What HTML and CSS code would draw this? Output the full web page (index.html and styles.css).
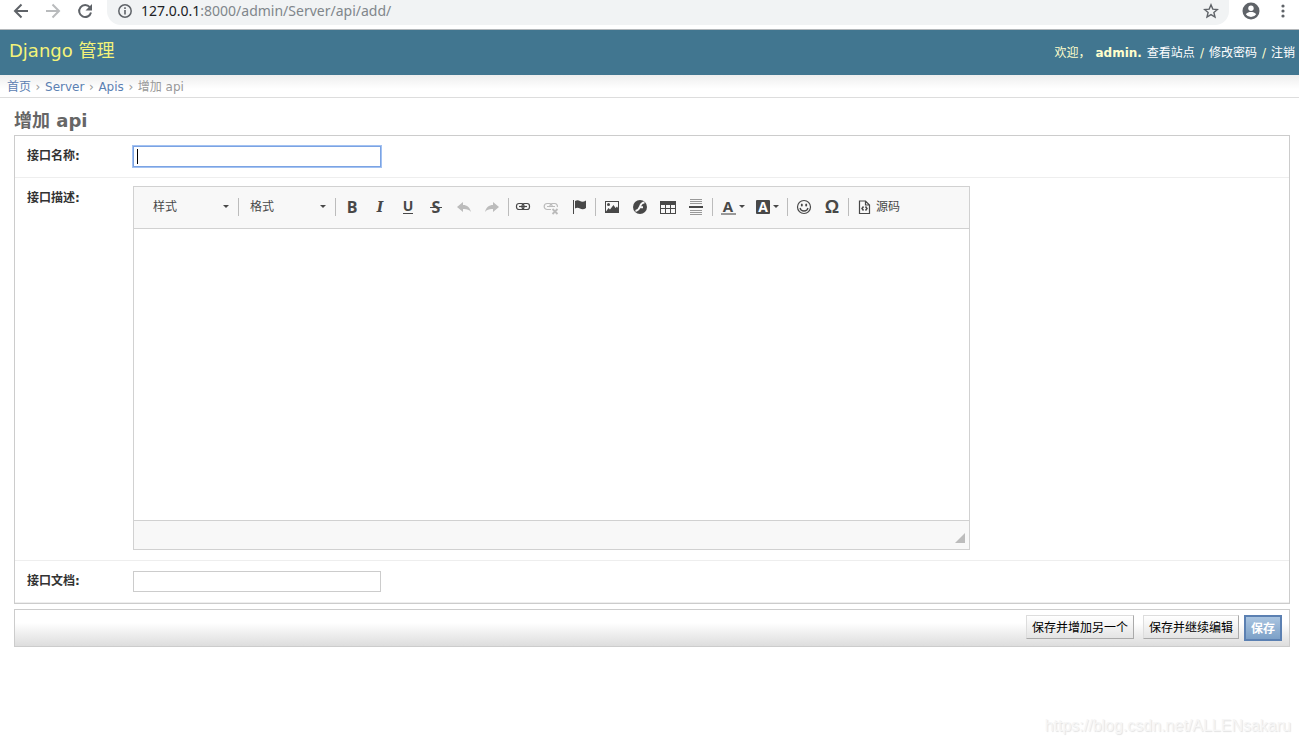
FILE: index.html
```html
<!DOCTYPE html>
<html lang="zh-CN">
<head>
<meta charset="utf-8">
<title>增加 api | Django 管理</title>
<link rel="stylesheet" href="styles.css">
</head>
<body>
<div class="browser-bar">
  <button class="nav-btn" type="button" aria-label="后退"><svg width="16" height="16" viewBox="0 0 16 16" fill="none" stroke="#5f6368" stroke-width="2"><path d="M15 8H2.500M8.500 1.500 2 8l6.500 6.500"/></svg></button>
  <button class="nav-btn" type="button" aria-label="前进"><svg width="16" height="16" viewBox="0 0 16 16" fill="none" stroke="#b9bbbd" stroke-width="2"><path d="M1 8h12.500M7.500 1.500 14 8l-6.500 6.500"/></svg></button>
  <button class="nav-btn" type="button" aria-label="刷新"><svg width="16" height="16" viewBox="0 0 16 16"><path d="M12.800 4.200A6 6 0 1 0 14 9.500" fill="none" stroke="#5f6368" stroke-width="2"/><path d="M15 1v6.500H8.500z" fill="#5f6368"/></svg></button>
  <div class="omnibox">
    <svg width="16" height="16" viewBox="0 0 16 16"><circle cx="8" cy="8" r="6.200" fill="none" stroke="#5f6368" stroke-width="1.500"/><path d="M7.200 7h1.600v4.500H7.200zM7.200 4.300h1.600v1.600H7.200z" fill="#5f6368"/></svg>
    <span class="url"><span class="url-host">127.0.0.1</span>:8000/admin/Server/api/add/</span>
    <svg width="16" height="16" viewBox="0 0 16 16"><path d="m8 1.800 1.800 4.300 4.600.4-3.500 3 1.100 4.500L8 11.600 4 14l1.100-4.500-3.500-3 4.600-.4z" fill="none" stroke="#5f6368" stroke-width="1.400"/></svg>
  </div>
  <button class="nav-btn" type="button" aria-label="用户"><svg width="18" height="18" viewBox="0 0 18 18"><circle cx="9" cy="9" r="8.500" fill="#5f6368"/><circle cx="9" cy="6.200" r="2.700" fill="#fff"/><path d="M3.800 12.200c1-1.700 3.300-2.200 5.200-2.200s4.200.5 5.200 2.200A6.200 6.200 0 0 1 9 15a6.200 6.200 0 0 1-5.200-2.800z" fill="#fff"/></svg></button>
  <button class="nav-btn" type="button" aria-label="菜单"><svg width="16" height="16" viewBox="0 0 16 16" fill="#5f6368"><circle cx="8" cy="3" r="1.600"/><circle cx="8" cy="8" r="1.600"/><circle cx="8" cy="13" r="1.600"/></svg></button>
</div>

<header class="header">
  <div class="branding">Django 管理</div>
  <div class="user-tools"><span>欢迎，</span> <strong>admin.</strong> <a href="#">查看站点</a> <span>/</span> <a href="#">修改密码</a> <span>/</span> <a href="#">注销</a></div>
</header>
<nav class="breadcrumbs"><a href="#">首页</a> <span class="crumb-sep">›</span> <a href="#">Server</a> <span class="crumb-sep">›</span> <a href="#">Apis</a> <span class="crumb-sep">›</span> <span>增加 api</span></nav>

<main class="content">
  <h1 class="title">增加 api</h1>
  <form>
    <div class="module">
      <div class="form-row">
        <label class="field-label" for="name">接口名称:</label>
        <input class="text-field focused" id="name" type="text">
      </div>
      <div class="form-row editor-row">
        <span class="field-label">接口描述:</span>
        <div class="editor">
          <div class="toolbar">
            <button class="combo" type="button">样式<i class="arrow"></i></button>
            <i class="sep"></i>
            <button class="combo" type="button">格式<i class="arrow"></i></button>
            <i class="sep"></i>
            <div class="group">
              <button class="tool" type="button">B</button>
              <button class="tool italic" type="button">I</button>
              <button class="tool underline" type="button"><span>U</span></button>
              <button class="tool strike" type="button"><span>S</span></button>
              <button class="tool off" type="button" aria-label="撤消"><svg width="16" height="16" viewBox="0 0 16 16"><path d="M1 8l6-5v3c4 0 7 2.500 8 7-2-2.500-4.500-3.200-8-3v3z"/></svg></button>
              <button class="tool off" type="button" aria-label="重做"><svg width="16" height="16" viewBox="0 0 16 16"><path d="M15 8L9 3v3c-4 0-7 2.500-8 7 2-2.500 4.500-3.200 8-3v3z"/></svg></button>
            </div>
            <i class="sep"></i>
            <div class="group tight">
              <button class="tool" type="button" aria-label="链接"><svg width="16" height="16" viewBox="0 0 16 16" fill="none" stroke="#484848" stroke-width="1.200"><rect x="1.500" y="4.500" width="7.500" height="6" rx="2.500"/><rect x="7" y="4.500" width="7.500" height="6" rx="2.500"/><path d="M4 7.500h8"/></svg></button>
              <button class="tool" type="button" aria-label="取消链接"><svg width="16" height="16" viewBox="0 0 16 16" fill="none" stroke="#bbb" stroke-width="1.200"><path d="M8 10.500H4.200a2.700 2.700 0 0 1 0-6h2.300a2.700 2.700 0 0 1 2.600 3M7 8a2.700 2.700 0 0 1 2.600-3.500h2a2.700 2.700 0 0 1 2.700 3.500M4 7.500h8"/><path d="M9.500 10l5 5M14.500 10l-5 5" stroke-width="1.800"/></svg></button>
              <button class="tool" type="button" aria-label="锚点"><svg width="16" height="16" viewBox="0 0 16 16"><path d="M2 1h1v14H2zM4 2c2-1.200 3.500-1 5 0s3.500 1 6-.5V9c-2 1.500-4.300 1.500-6 .5S5.500 8.500 4 9.500z"/></svg></button>
            </div>
            <i class="sep"></i>
            <div class="group">
              <button class="tool" type="button" aria-label="图像"><svg width="16" height="16" viewBox="0 0 16 16"><path fill-rule="evenodd" d="M1 2h14v12H1zm1 1v9.500l2.500-3.500L6 10.500 9.500 6l2 3L13 7.500l1 1.500V3z"/><circle cx="4.500" cy="5.500" r="1.500"/></svg></button>
              <button class="tool" type="button" aria-label="Flash"><svg width="16" height="16" viewBox="0 0 16 16"><circle cx="8" cy="8" r="7"/><path d="M12.500 3.500C9.500 3.500 8.700 5.500 8 7.500S6.500 11.500 3.500 12M7 8.200h4" fill="none" stroke="#f8f8f8" stroke-width="1.900"/></svg></button>
              <button class="tool" type="button" aria-label="表格"><svg width="16" height="16" viewBox="0 0 16 16"><path fill-rule="evenodd" d="M0 2h16v13H0zm1 4v3h4V6zm5 0v3h4V6zm5 0v3h4V6zM1 10v4h4v-4zm5 0v4h4v-4zm5 0v4h4v-4z"/></svg></button>
              <button class="tool" type="button" aria-label="水平线"><svg width="16" height="16" viewBox="0 0 16 16"><path d="M2 0h12v1H2zm0 2h12v1H2zm0 2h12v1H2zm0 7h12v1H2zm0 2h12v1H2zm0 2h12v1H2z" fill="#999"/><path d="M1 7h14v2H1z"/></svg></button>
            </div>
            <i class="sep"></i>
            <div class="group">
              <button class="tool color" type="button"><span class="fg">A</span><i class="arrow"></i></button>
              <button class="tool color" type="button"><span class="bg">A</span><i class="arrow"></i></button>
            </div>
            <i class="sep"></i>
            <div class="group">
              <button class="tool" type="button" aria-label="表情符"><svg width="16" height="16" viewBox="0 0 16 16"><circle cx="8" cy="8" r="6.500" fill="none" stroke="#484848" stroke-width="1.200"/><ellipse cx="5.800" cy="6" rx="1" ry="1.500"/><ellipse cx="10.200" cy="6" rx="1" ry="1.500"/><path d="M4 9c1 4 7 4 8 0" fill="none" stroke="#484848" stroke-width="1.300"/></svg></button>
              <button class="tool omega" type="button">Ω</button>
            </div>
            <i class="sep"></i>
            <button class="source" type="button"><svg width="16" height="16" viewBox="0 0 16 16" fill="none" stroke="#484848"><path d="M3.500 2h6l4 4v8.500h-10zM9.500 2v4h4" stroke-width="1.200"/><path d="M7.500 7.500 6 9.500l1.500 2M9.500 7.500l1.500 2-1.500 2" stroke-width="1.500"/></svg>源码</button>
          </div>
          <div class="edit-area" contenteditable="true" aria-label="接口描述"></div>
          <div class="status"><svg width="10" height="10" viewBox="0 0 10 10"><path d="M10 0v10H0z" fill="#bcbcbc"/></svg></div>
        </div>
      </div>
      <div class="form-row">
        <label class="field-label" for="doc">接口文档:</label>
        <input class="text-field" id="doc" type="text">
      </div>
    </div>
    <div class="submit-row">
      <button class="btn btn-another" type="submit">保存并增加另一个</button>
      <button class="btn" type="submit">保存并继续编辑</button>
      <button class="btn btn-save" type="submit">保存</button>
    </div>
  </form>
</main>
<footer class="watermark">https://blog.csdn.net/ALLENsakaru</footer>
</body>
</html>
```

FILE: styles.css
```css
* { box-sizing: border-box; }
body {
  margin: 0;
  min-height: 100vh;
  display: flex;
  flex-direction: column;
  background: #fff;
  color: #333;
  font: 12px/16px "DejaVu Sans", "Noto Sans CJK SC", sans-serif;
}
button { font: inherit; color: inherit; }
svg { display: block; flex: none; }
a { text-decoration: none; }

.browser-bar {
  display: flex;
  align-items: flex-start;
  height: 30px;
  padding: 0 0 0 5px;
  border-bottom: 1px solid #b4b8bb;
}
.nav-btn {
  width: 32px;
  height: 22px;
  padding: 0;
  border: 0;
  background: none;
  display: flex;
  align-items: center;
  justify-content: center;
}
.omnibox {
  flex: 1;
  display: flex;
  align-items: center;
  gap: 8px;
  height: 25px;
  margin: 0 6px;
  padding: 0 10px 3px;
  border-radius: 0 0 14px 14px;
  background: #f1f3f4;
}
.url { flex: 1; font: 14px/20px "Noto Sans", sans-serif; color: #80868b; }
.url-host { color: #202124; }

.header {
  display: flex;
  align-items: center;
  justify-content: space-between;
  height: 45px;
  padding: 0 4px 0 9px;
  background: #417690;
  color: #ffc;
}
.branding { font-size: 18px; line-height: 24px; color: #f4f379; padding-bottom: 4px; }
.user-tools { display: flex; gap: 5px; }
.user-tools a { color: #fff; }
.breadcrumbs {
  display: flex;
  gap: 4px;
  height: 23px;
  padding: 4px 7px 0;
  border-bottom: 1px solid #ddd;
  background: linear-gradient(#eee, #fff 14px);
  color: #999;
}
.breadcrumbs a { color: #5b80b2; }
.crumb-sep { width: 6px; text-align: center; }

.content { padding: 11px 9px 0 14px; }
.title { margin: 0 0 2px; font-size: 18px; line-height: 24px; color: #666; }
.module { border: 1px solid #ccc; }
.form-row {
  display: flex;
  align-items: flex-start;
  padding: 10px 12px;
  border-bottom: 1px solid #eee;
}
.editor-row { padding-top: 8px; }
.field-label { width: 106px; padding-top: 2px; font-weight: bold; }
.editor-row .field-label { padding-top: 4px; }
.text-field {
  width: 248px;
  height: 21px;
  border: 1px solid #ccc;
  padding: 2px 3px;
  font: inherit;
}
.focused {
  outline: 1px solid #a3c2f2;
  border-color: #7ba3e3;
  background: linear-gradient(#000, #000) 3px 2px / 1px 15px no-repeat;
}

.editor { width: 837px; border: 1px solid #d1d1d1; }
.toolbar {
  display: flex;
  align-items: center;
  height: 42px;
  padding: 0 0 2px 8px;
  background: #f8f8f8;
  border-bottom: 1px solid #d1d1d1;
  color: #484848;
}
.combo {
  display: flex;
  align-items: center;
  justify-content: space-between;
  width: 96px;
  padding: 0 9px 0 11px;
  border: 0;
  background: none;
}
.arrow { border: 3px solid transparent; border-top-color: #484848; border-bottom: 0; }
.sep { width: 1px; height: 18px; background: #bcbcbc; }
.group { display: flex; padding: 0 2px; }
.tight { padding-left: 0; }
.tool {
  display: flex;
  align-items: center;
  justify-content: center;
  width: 28px;
  height: 28px;
  padding: 0;
  border: 0;
  background: none;
  fill: #484848;
  font: bold 16px/16px "Open Sans", sans-serif;
}
.off { fill: #bcbcbc; }
.italic { font-family: "DejaVu Serif", serif; font-style: italic; font-size: 14px; }
.underline span { border-bottom: 1px solid #484848; font-size: 14px; line-height: 14px; }
.strike span { padding: 0 2px; background: linear-gradient(#484848, #484848) 0 8px / 100% 1px no-repeat; }
.omega { font: bold 18px/18px "Liberation Sans", sans-serif; }
.color { width: 35px; gap: 3px; }
.fg { width: 15px; border-bottom: 2px solid #999; font-size: 15px; line-height: 14px; }
.bg { width: 14px; border-radius: 1px; background: #484848; color: #fff; font-size: 14px; line-height: 14px; }
.source {
  display: flex;
  align-items: center;
  gap: 4px;
  padding: 0 7px;
  border: 0;
  background: none;
}
.edit-area { height: 291px; }
.status {
  display: flex;
  justify-content: flex-end;
  align-items: flex-end;
  height: 29px;
  padding: 0 4px 6px;
  border-top: 1px solid #d1d1d1;
  background: #f8f8f8;
}

.submit-row {
  display: flex;
  align-items: flex-start;
  justify-content: flex-end;
  gap: 5px;
  height: 38px;
  margin-top: 5px;
  padding: 5px 7px;
  border: 1px solid #ccc;
  background: linear-gradient(#fff 35%, #ddd);
}
.btn {
  height: 24px;
  padding: 2px 5px 0;
  border: 1px solid;
  border-color: #ddd #aaa #aaa #ddd;
  background: linear-gradient(#fff, #e4e4e4);
  color: #000;
}
.btn-another { margin-right: 4px; }
.btn-save {
  height: 26px;
  padding: 2px 5px 0;
  border: 2px solid #5b80b2;
  background: linear-gradient(#a9c4e0, #7ca0c7);
  color: #fff;
  font-weight: bold;
}
.watermark {
  margin-top: auto;
  padding: 0 8px 9px;
  text-align: right;
  font: 16px/18px "Liberation Sans", sans-serif;
  color: #f6f6f6;
  text-shadow: 1px 1px 1px #e2e2e2;
}
```
